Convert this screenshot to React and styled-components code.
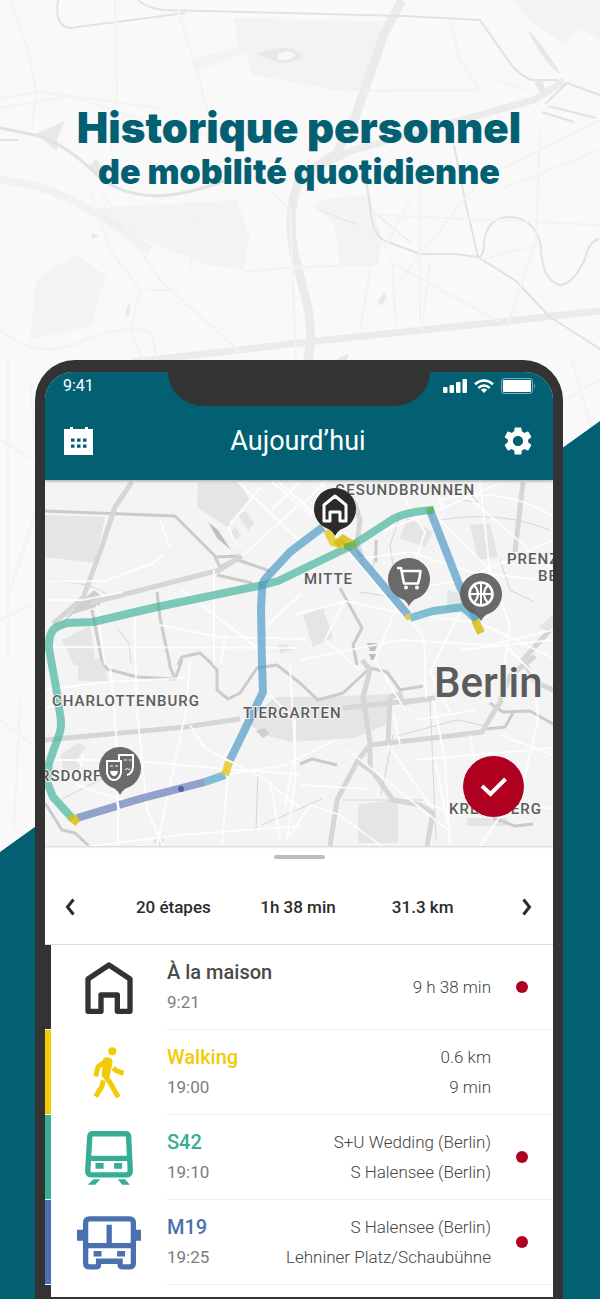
import React from 'react';
import styled, { createGlobalStyle } from 'styled-components';
import { MdSettings } from 'react-icons/md';

const color = {
    teal: '#036072',
    frame: '#333333',
    paper: '#f9f9f9',
    red: '#b00020',
    walk: '#f2cb05',
    train: '#36ae95',
    bus: '#4a70b0',
    home: '#333333',
};

const GlobalStyle = createGlobalStyle`
    * {
        box-sizing: border-box;
    }
    body {
        margin: 0;
        font-family: Roboto, "Noto Sans", sans-serif;
        background: ${color.paper};
    }
`;

const Page = styled.main`
    position: relative;
    overflow: hidden;
    padding: 106px 37px 0 35px;
`;

const Backdrop = styled.svg`
    position: absolute;
    inset: 0;
    width: 100%;
    height: 100%;
    z-index: -1;
`;

const Headline = styled.h1`
    margin: 0 0 166px;
    color: ${color.teal};
    font-family: Inter, sans-serif;
    font-weight: 900;
    font-size: 42px;
    line-height: 44px;
    text-align: center;
`;

const SubHeadline = styled.span`
    display: block;
    font-size: 34px;
`;

const Phone = styled.section`
    background: ${color.frame};
    border-radius: 40px 40px 0 0;
    padding: 12px 10px 2px;
`;

const Screen = styled.div`
    background: white;
    border-radius: 28px 28px 0 0;
    overflow: hidden;
`;

const Header = styled.header`
    position: relative;
    z-index: 1;
    background: ${color.teal};
    color: white;
    box-shadow: 0 1px 3px rgba(0, 0, 0, .35);
`;

const StatusBar = styled.div`
    display: grid;
    grid-template-columns: 1fr 262px 1fr;
    grid-template-rows: 28px;
    height: 30px;
`;

const Clock = styled.time`
    padding-left: 18px;
    font-size: 16px;
    line-height: 28px;
`;

const Notch = styled.div`
    height: 34px;
    background: ${color.frame};
    border-radius: 0 0 36px 36px / 0 0 34px 34px;
`;

const StatusIcons = styled.div`
    display: flex;
    align-items: center;
    justify-content: flex-end;
    gap: 7px;
    padding-right: 16px;
`;

const AppBar = styled.div`
    display: flex;
    align-items: center;
    justify-content: space-between;
    height: 78px;
    padding: 0 18px;
`;

const AppTitle = styled.h2`
    margin: 0;
    font-size: 27px;
    font-weight: 400;
`;

const IconButton = styled.button`
    display: flex;
    align-items: center;
    justify-content: center;
    width: ${props => props.$width || 34}px;
    height: 34px;
    padding: 0;
    border: 0;
    background: none;
    color: inherit;
    cursor: pointer;
`;

const MapArea = styled.div`
    position: relative;
    height: 366px;
    background: #f4f4f4;
    box-shadow: 0 1px 2px rgba(0, 0, 0, .2);
`;

const MapCanvas = styled.svg`
    display: block;
    width: 100%;
    height: 100%;
`;

const MapLabel = styled.text`
    font-size: ${props => props.$size || 15}px;
    font-weight: 500;
    letter-spacing: ${props => props.$size ? 0 : 1}px;
    fill: #5c5c5c;
    stroke: #f5f5f5;
    stroke-width: 2px;
    paint-order: stroke;
`;

const ConfirmButton = styled.button`
    position: absolute;
    right: 29px;
    bottom: 29px;
    display: flex;
    align-items: center;
    justify-content: center;
    width: 61px;
    height: 61px;
    padding: 0;
    border: 0;
    border-radius: 50%;
    background: ${color.red};
    cursor: pointer;
`;

const Handle = styled.div`
    width: 51px;
    height: 4px;
    margin: 9px auto 11px;
    border-radius: 2px;
    background: #bdbdbd;
`;

const Summary = styled.nav`
    display: grid;
    grid-template-columns: 50px 1fr 52px;
    align-items: center;
    height: 75px;
    border-bottom: 1px solid #dcdcdc;
    color: #2b2b2b;
`;

const Totals = styled.div`
    display: grid;
    grid-template-columns: repeat(3, 1fr);
    padding: 0 16px;
    font-size: 17px;
    font-weight: 500;
    text-align: center;
`;

const Steps = styled.ul`
    margin: 0;
    padding: 0;
    list-style: none;
`;

const Step = styled.li`
    display: flex;
    height: ${props => props.$peek ? 12 : 85}px;
`;

const Stripe = styled.div`
    flex: none;
    width: 6px;
    margin-bottom: ${props => props.$last ? 0 : 1}px;
    background: ${props => props.$color};
`;

const StepIcon = styled.div`
    display: flex;
    flex: none;
    align-items: center;
    justify-content: center;
    width: 116px;
    color: ${props => props.$color};
`;

const StepBody = styled.div`
    display: flex;
    flex: 1;
    align-items: center;
    padding-right: 25px;
    border-bottom: 1px solid #eeeeee;
    line-height: 30px;
`;

const StepTitle = styled.h3`
    margin: 0;
    color: ${props => props.$color};
    font-size: 20px;
    font-weight: 500;
    line-height: 30px;
`;

const StepTime = styled.time`
    color: #7d7d7d;
    font-size: 17px;
`;

const StepDetails = styled.div`
    flex: 1;
    color: #444444;
    font-size: 17px;
    font-weight: 300;
    text-align: right;
`;

const Dot = styled.span`
    width: 12px;
    height: 12px;
    margin-left: 25px;
    border-radius: 50%;
    background: ${props => props.$on ? color.red : 'transparent'};
`;

const HomeIcon = () => (
    <svg width="48" height="52" viewBox="0 0 142 156" fill="none" stroke="currentColor" strokeWidth="16" strokeLinejoin="round">
        <path d="M8 51 71 9l63 42v97H96v-49H47v49H8z"/>
    </svg>
);

const WalkIcon = () => (
    <svg width="32" height="52" viewBox="0 0 94 156" fill="none" stroke="currentColor" strokeWidth="15">
        <circle cx="57" cy="13" r="12" fill="currentColor" stroke="none"/>
        <path d="M7 88l7-29 25-18" strokeLinejoin="round"/>
        <path d="M30 34q12-7 23 0l5 9-9 46-10 6-14-6z" fill="currentColor" stroke="none"/>
        <path d="M60 63l8 8 23 8M36 88l13 17 26 46M30 100l-4 18L7 149"/>
    </svg>
);

const TrainIcon = () => (
    <svg width="48" height="54" viewBox="0 0 142 160" fill="none" stroke="currentColor" strokeWidth="16">
        <path d="M14 16q1-8 9-8h97q8 0 9 8l5 101q0 13-12 13H20q-12 0-12-13zM10 81h122"/>
        <path d="M31 95h24v17H31zM86 95h24v17H86zM25 143h20l-15 16H8zM97 143h21l15 16h-23z" fill="currentColor" stroke="none"/>
    </svg>
);

const BusIcon = () => (
    <svg width="64" height="54" viewBox="0 0 193 162" fill="none" stroke="currentColor" strokeWidth="16">
        <path d="M26 20q0-12 12-12h120q12 0 12 12v121q0 12-12 12h-20q-8 0-8-8v-9H65v9q0 8-8 8H38q-12 0-12-12zM26 89h144M97 26v60"/>
        <path d="M50 105h24v17H50zM121 105h24v17h-24zM0 41h20v33H0zM173 41h20v33h-20z" fill="currentColor" stroke="none"/>
    </svg>
);

const CalendarIcon = () => (
    <svg width="30" height="28" viewBox="0 0 30 28" fill="currentColor">
        <path d="M0 2h6V0h3v2h12V0h3v2h5v26H0z"/>
        <path d="M7 11.500h3.500v3.300H7zm6 0h3.500v3.300H13zm6 0h3.500v3.300H19zm-12 6h3.500v3.300H7zm6 0h3.500v3.300H13zm6 0h3.500v3.300H19z" fill={color.teal}/>
    </svg>
);

const SignalIcon = () => (
    <svg width="24" height="14" viewBox="0 0 24 14" fill="currentColor">
        <rect x="0" y="8" width="4.500" height="6" rx="1"/>
        <rect x="6.500" y="6" width="4.500" height="8" rx="1"/>
        <rect x="13" y="3" width="4.500" height="11" rx="1"/>
        <rect x="19.500" y="0" width="4.500" height="14" rx="1"/>
    </svg>
);

const WifiIcon = () => (
    <svg width="20" height="14" viewBox="0 0 20 14" fill="none" stroke="currentColor" strokeWidth="2.600">
        <path d="M1 5.300q9-7.600 18 0M4.300 8.900q5.700-4.800 11.400 0"/>
        <path d="M10 14l-3.200-3.300q3.200-2.400 6.400 0z" fill="currentColor" stroke="none"/>
    </svg>
);

const BatteryIcon = () => (
    <svg width="36" height="16" viewBox="0 0 36 16">
        <rect x=".5" y=".5" width="31" height="15" rx="3" fill="none" stroke="white" strokeOpacity=".5"/>
        <rect x="2" y="2" width="28" height="12" rx="1" fill="white"/>
        <path d="M33 5.500q2 2.500 0 5z" fill="white" fillOpacity=".5"/>
    </svg>
);

const ChevronIcon = ({flip}) => (
    <svg width="10" height="18" viewBox="0 0 10 18" fill="none" stroke="currentColor" strokeWidth="3">
        <path d={flip ? 'M1.500 1.500 7.500 9l-6 7.500' : 'M8.500 1.500 2.500 9l6 7.500'}/>
    </svg>
);

const CheckIcon = () => (
    <svg width="28" height="20" viewBox="0 0 28 20" fill="none" stroke="white" strokeWidth="4">
        <path d="M2 9l8.500 8L25.500 2"/>
    </svg>
);

const Pin = ({x, y, dark, children}) => (
    <g transform={`translate(${x} ${y})`}>
        <path d="M-21 0a21 21 0 1 1 29 19.500Q3 21 0 27-3 21-8 19.500A21 21 0 0 1-21 0z"
              fill={dark ? '#2b2b2b' : '#5f5f5f'} fillOpacity={dark ? 1 : .93}/>
        <g fill="none" stroke="white" strokeWidth="2.600">{children}</g>
    </g>
);

const cityParks = [
    'M45 515l60 2-10 46-50-6z',
    'M198 482h40l12 18-23 27-30-20z',
    'M238 515l8-4 8 12-6 8zM230 532l6-5 5 9-7 5z',
    'M62 640l28-14 6 39H74z',
    'M407 517l26 15-8 15-25-9z',
    'M470 525l20-2 8 34-20 3z',
    'M303 615l20-7 10 30-20 9z',
    'M247 722l28-25h45l70-3v29l-35 15-65 4-28-8z',
    'M358 805l40-6v44h-40zM78 660l25-2 5 24-30-1z',
    'M60 755l18-12 8 4-10 14 8 8-20 2z',
    'M448 590l20 6-4 18-18-4zM153 843l4-6 8 1-5 9z',
    'M467 818h40v8h-40zM538 628l15-14v18z',
    'M277 645l10-1 6 6-12 4z',
];

const cityRails = [
    'M132 482l-17 25-15 45-17 46-30 26',
    'M90 603l130-33 22-14',
    'M45 740l140-13 55-8M343 708l92-10',
    'M362 660l8 10-7 27 7 46v27',
    'M370 745l63-7 49-6 13-22 7-10',
    'M390 697l-2 46M390 697l10-3 2 9 33-5',
    'M370 745l-12 15-21 40-7 46M358 762l15 10 20 28 27 5 13 8-6 33',
    'M523 482l-8 70M550 630l-27 30 12 22 18 8M500 700l10-24 25-20',
    'M345 490l10 14 5 16-3 24 6 16',
];

const cityWater = [
    'M45 511l130 5 41 41 24-1M215 557l5 10 15-8 35 12',
    'M157 592l3 26 10 47M217 575l35 8',
    'M178 665l4-8 18-4 13 12',
    'M102 660l5 9 30 8 38 2 7-19M175 679l-6-15',
    'M208 660l9 10v20l11 9 12-6 17-25 20-3 23 18 18 17 25-7 27-25 17 4 13 18 23-4',
    'M45 803l17 27 13 3 15 14',
    'M340 588l22 40-9 17 4 20M376 540v22',
    'M490 703l13 9 27-1 23 13M485 729l20-2 8-14',
    'M300 764l12-5 25 6M493 818l22 8 18-2',
    'M92 610l6 30 4 22',
];

const cityStreets = [
    'M45 600h38l40-8M45 582l60-1 48-18 10-8M170 548l-10-28',
    'M242 556l58-52M228 527l10 20M238 482l65 62M260 488l-30 36',
    'M300 482l-28 28M278 482l25 22 40-40M272 482l40 34',
    'M97 605l8 60M135 660v-46M45 647l255 1M214 570v95M160 625l60 12 85 2',
    'M220 665l6-30M267 625l35-32M180 588l90 70M45 760h80l100 9 75 5',
    'M110 665l4 40 4 60v80M190 660l-4 50-30 140M135 650l2 60 10 100 16 36',
    'M190 725l14 22 26 15 30 14 40 32M228 770l-6 75M60 850l120-15 120-9',
    'M45 690l60-8 80-4M225 775l60-10 50-25M280 840l-10-60M290 665l5 90-10 50',
    'M300 500l40 40 40 50 25 28M320 482l30 40M358 540l80-30 60-26',
    'M295 615l50-14 62 13 73 9 73 35M350 560l60-8 60 20 83 9',
    'M410 618l14 20 2 60M430 510l60 60 20 55-10 70M460 490l93 80M395 482l30 50-20 60',
    'M440 500q60-16 113 16M433 480l10 30M480 482l10 90M553 540l-90 40-60 10',
    'M345 600l-20 40 35 30M300 660l100-20 90 5 63-15M395 610l-20 50 30 50M460 612l-30 60 20 40',
    'M388 745l42 60 33 10M415 760l138-12M433 700l12 60 5 85M534 680l4 40-14 60-45 68',
    'M415 720l60-10M400 745l-6-30M436 765l12 60M500 735l53 20M470 735l10 60 73 14',
    'M290 835l20-30 30 10 40 30M300 785l70 4M270 695l25 25v60l-8 60M348 750l100 80',
    'M262 700l-40 60M83 700l-38 8M83 755l-6 30 60 20M500 640l40 40M460 650l93-10',
];

const cityHairlines = [
    'M117 628l12 15 2 20M45 582q50-2 65 16M430 700l6 140M62 799l40-20 14-18',
    'M397 736l60-16 30 6M343 800h80M262 825l60-26M400 515l-10 30 6 40M500 560l10 30 24 12',
    'M410 600l-50-8M376 545l-4 30M440 520q60-10 110 10M258 770l-2 60M393 735l-12 60M460 500l8-8 10 10z',
];

const CityMap = () => (
    <MapCanvas viewBox="45 480 508 366" preserveAspectRatio="xMidYMid slice">
        <g fill="#e5e5e5">{cityParks.map(d => <path key={d} d={d}/>)}</g>
        <path d="M208 522l10 8 13 20-14-12zM367 643h11l-3 8h-5zM369 654h7l-2 6h-3z" fill="#bfbfbf"/>
        <path d="M80 603l14-13 9 8-4 8-26 8-14 12zM256 731l9-3 4 6-6 4z" fill="#cfcfcf"/>
        <g fill="none" stroke="#d6d6d6" strokeLinejoin="round">
            <g strokeWidth="1">{cityHairlines.map(d => <path key={d} d={d}/>)}</g>
            <g strokeWidth="3" stroke="#cbcbcb">{cityWater.map(d => <path key={d} d={d}/>)}</g>
            <g strokeWidth="5">{cityRails.map(d => <path key={d} d={d}/>)}</g>
            <g strokeWidth="2" stroke="#ffffff" strokeOpacity=".8">{cityStreets.map(d => <path key={d} d={d}/>)}</g>
        </g>

        <g fill="none" strokeWidth="8" strokeOpacity=".68" strokeLinejoin="round">
            <path stroke="#3fb396" d="M73 819l-20-22-6-15 2-19 11-31q2-9 0-18l-4-27-5-27-2-12q-1-18 10-22l8-3 26-1 64-15 106-22 15-4 75-36 40-26q12-7 40-9"/>
            <path stroke="#4a97c3" d="M323 527l-33 25-24 26q-4 4-4 12l-1 18 1 57 1 27-33 68"/>
            <path stroke="#4a97c3" d="M350 546l58 69M430 510l30 77 17 33"/>
            <path stroke="#45a3c6" d="M410 618l23-7 30-4 14 13M225 775l-20 7"/>
            <path stroke="#6079b8" d="M205 782l-62 16-24 7M117 806l-40 12"/>
        </g>
        <g fill="none" strokeWidth="8" strokeOpacity=".85">
            <path stroke="#e3c927" d="M327 530l6 12 12 3M229 762l-4 13"/>
            <path stroke="#d8bc10" d="M336 545l7-6 12 7M475 620l6 13M70 816l8 7"/>
            <path stroke="#68b35a" strokeWidth="6" d="M344 547l12-3M427 511l7-2"/>
            <path stroke="#ffffff" strokeWidth="2" d="M118 802v8"/>
        </g>
        <circle cx="181" cy="789" r="3" fill="#4a65ac"/>
        <circle cx="408" cy="617" r="3" fill="#e3c94b"/>

        <MapLabel x="335" y="495">GESUNDBRUNNEN</MapLabel>
        <MapLabel x="304" y="584">MITTE</MapLabel>
        <MapLabel x="507" y="564">PRENZ</MapLabel>
        <MapLabel x="538" y="581">BE</MapLabel>
        <MapLabel x="52" y="706">CHARLOTTENBURG</MapLabel>
        <MapLabel x="243" y="718">TIERGARTEN</MapLabel>
        <MapLabel x="40" y="781">RSDORF</MapLabel>
        <MapLabel x="449" y="814">KREUZBERG</MapLabel>
        <MapLabel x="434" y="697" $size={42}>Berlin</MapLabel>

        <Pin x={335} y={509} dark>
            <path strokeWidth="3" strokeLinejoin="round" d="M-11-4L0-13l11 9v16H5V3H-5v9h-6z"/>
        </Pin>
        <Pin x={409} y={579}>
            <path d="M-12-11h4L-5 4.500h14q2-6 2.500-12.500H-7.500" strokeLinejoin="round"/>
            <circle cx="-3" cy="8.500" r="2" fill="white" stroke="none"/>
            <circle cx="8" cy="8.500" r="2" fill="white" stroke="none"/>
        </Pin>
        <Pin x={481} y={594}>
            <circle r="11.500"/>
            <path strokeWidth="2" d="M0-11v22M-11 0h22M-7-9q8 9 0 18M7-9q-8 9 0 18"/>
        </Pin>
        <Pin x={120} y={768}>
            <path strokeWidth="2" d="M-1-8v-5h14v12q-1 7-6 8"/>
            <path strokeWidth="2" d="M-13-7H1V5q-2 7-7 7t-7-7z"/>
            <path strokeWidth="1" d="M-10-2h3M-5-2h3M4-8h3M9-8h2M5 2q2-3 5 0"/>
            <path d="M-10 3h8q-1 5-4 5t-4-5z" fill="white" stroke="none"/>
        </Pin>
    </MapCanvas>
);

const PageBackdrop = () => (
    <Backdrop viewBox="0 0 600 1299" preserveAspectRatio="xMidYMin slice" aria-hidden="true">
        <path fill="#f3f3f3" d="M234 18l158 4-28 69-26 0-86-17-6-22-50 20-6-12 48-14zM512 0h88v40l-20-12-16 16-30-20zM96 208l140-8 14 36-6 34-40-6-96-40zM320 200l50-6 12 50-4 22h-38l-6-44-20-14zM36 280l40-26 30 22-16 50-60 14z"/>
        <path fill="#e8e8e8" d="M257 54q20-8 34-5 8 3 11 7-6 7-20 7-14-3-25-9zM35 134l30-13-8 18v12zM527 30q12 10 18 20 14 20 15 24-14-8-33-44zM92 233l7 3-7 3zM126 316q0-11 5-14l-2 14zM88 168l8-9 8 10-6 6zM340 357l9-3-3 8h-12zM534 82l8-2 4 12-4 4zM378 302l6-10 3 6-6 8z"/>
        <path fill="#f8f8f8" d="M278 54q8-5 18 0-4 7-18 6z"/>
        <g fill="none" stroke="#ebebeb" strokeLinejoin="round">
            <path strokeWidth="9" d="M402 0l-18 34-30 86-18 34-36 24q-14 34-6 74l14 56q6 30-2 60"/>
            <path strokeWidth="7" d="M132 362l108-12 76-9 184-19 100-11M314 168l40-18 180-50 30-19M470 0"/>
            <path strokeWidth="8" d="M0 180q50 4 100 36l50 34" strokeOpacity=".5"/>
        </g>
        <g fill="none" stroke="#e2e2e2" strokeWidth="2" strokeLinejoin="round">
            <path d="M58 0q-4 26 12 28l115-15M138 0q8 8 26 10l240 6 76 4 32 46q14 14 22 14h24"/>
            <path strokeWidth="3" d="M0 128l35 7q30 8 62 40 22 20 60 21 30-1 70-16"/>
            <path d="M0 140h18M366 178l6 44q6 18 16 20l32 12h34l24 3q6 0 6-14 2-24 24-26 26 0 33 28 0 34 18 40 14 0 26-26 4-18 14-20"/>
            <path d="M454 145l12 60 12 52M478 257l38 24 34 36 50 32M545 104l22-21 33 12M548 106l48 12M542 112l32 10"/>
            <path strokeWidth="1" d="M320 210l24 10 14 4M410 242l-36-30"/>
        </g>
        <g fill="none" stroke="#f3f3f3" strokeWidth="2">
            <path d="M10 0l18 50 8 40-4 40M115 0l2 90-6 60M178 10l16 50 24 90M450 20l10 40 20 30q-20 0-115 1M0 108l70-12 90 30 70 14"/>
            <path d="M0 330q40 34 90 8 50-16 62-4l6 30M100 190l60 90 80 72M90 190l20 60 30 40-10 40 18 40M244 272l40-4 92-4"/>
            <path d="M360 330l12-70M392 260l4 66M420 160v160M430 260l-8 70M390 262l110 60M380 215l220 10M540 130l-4 110-30 90M600 120l-120 60-80 100"/>
            <path d="M270 190l20 20 6 150M200 200l-10 70M0 98l40-6 120 16M180 290l-34 0M500 80l24 10M600 150l-100 40M410 200l-26 50M480 260l60-16"/>
            <path d="M30 380l10 120-30 90M0 440l34 20M0 620l34-16M8 360v300M0 720l34 26M572 360l20 70M600 380l-36 20M20 700l-6 130"/>
        </g>
        <path fill={color.teal} d="M0 852L600 421v878H0z"/>
    </Backdrop>
);

const steps = [
    {title: 'À la maison', time: '9:21', details: ['9 h 38 min'], tint: color.home, titleTint: '#4a4a4a', icon: <HomeIcon/>, dot: true},
    {title: 'Walking', time: '19:00', details: ['0.6 km', '9 min'], tint: color.walk, icon: <WalkIcon/>},
    {title: 'S42', time: '19:10', details: ['S+U Wedding (Berlin)', 'S Halensee (Berlin)'], tint: color.train, icon: <TrainIcon/>, dot: true},
    {title: 'M19', time: '19:25', details: ['S Halensee (Berlin)', 'Lehniner Platz/Schaubühne'], tint: color.bus, icon: <BusIcon/>, dot: true},
];

const StepRow = ({step}) => (
    <Step>
        <Stripe $color={step.tint}/>
        <StepIcon $color={step.tint}>{step.icon}</StepIcon>
        <StepBody>
            <div>
                <StepTitle $color={step.titleTint || step.tint}>{step.title}</StepTitle>
                <StepTime>{step.time}</StepTime>
            </div>
            <StepDetails>
                {step.details.map(line => <div key={line}>{line}</div>)}
            </StepDetails>
            <Dot $on={step.dot}/>
        </StepBody>
    </Step>
);

const App = () => (
    <>
        <GlobalStyle/>
        <Page>
            <PageBackdrop/>
            <Headline>
                Historique personnel
                <SubHeadline>de mobilité quotidienne</SubHeadline>
            </Headline>
            <Phone>
                <Screen>
                    <Header>
                        <StatusBar>
                            <Clock>9:41</Clock>
                            <Notch/>
                            <StatusIcons>
                                <SignalIcon/>
                                <WifiIcon/>
                                <BatteryIcon/>
                            </StatusIcons>
                        </StatusBar>
                        <AppBar>
                            <IconButton $width={32} aria-label="Calendrier"><CalendarIcon/></IconButton>
                            <AppTitle>Aujourd’hui</AppTitle>
                            <IconButton aria-label="Réglages"><MdSettings size={34}/></IconButton>
                        </AppBar>
                    </Header>
                    <MapArea>
                        <CityMap/>
                        <ConfirmButton aria-label="Valider"><CheckIcon/></ConfirmButton>
                    </MapArea>
                    <Handle/>
                    <Summary>
                        <IconButton $width={50} aria-label="Jour précédent"><ChevronIcon/></IconButton>
                        <Totals>
                            <span>20 étapes</span>
                            <span>1h 38 min</span>
                            <span>31.3 km</span>
                        </Totals>
                        <IconButton $width={52} aria-label="Jour suivant"><ChevronIcon flip/></IconButton>
                    </Summary>
                    <Steps>
                        {steps.map(step => <StepRow key={step.title} step={step}/>)}
                        <Step $peek>
                            <Stripe $color={color.home} $last/>
                        </Step>
                    </Steps>
                </Screen>
            </Phone>
        </Page>
    </>
);

export default App;
